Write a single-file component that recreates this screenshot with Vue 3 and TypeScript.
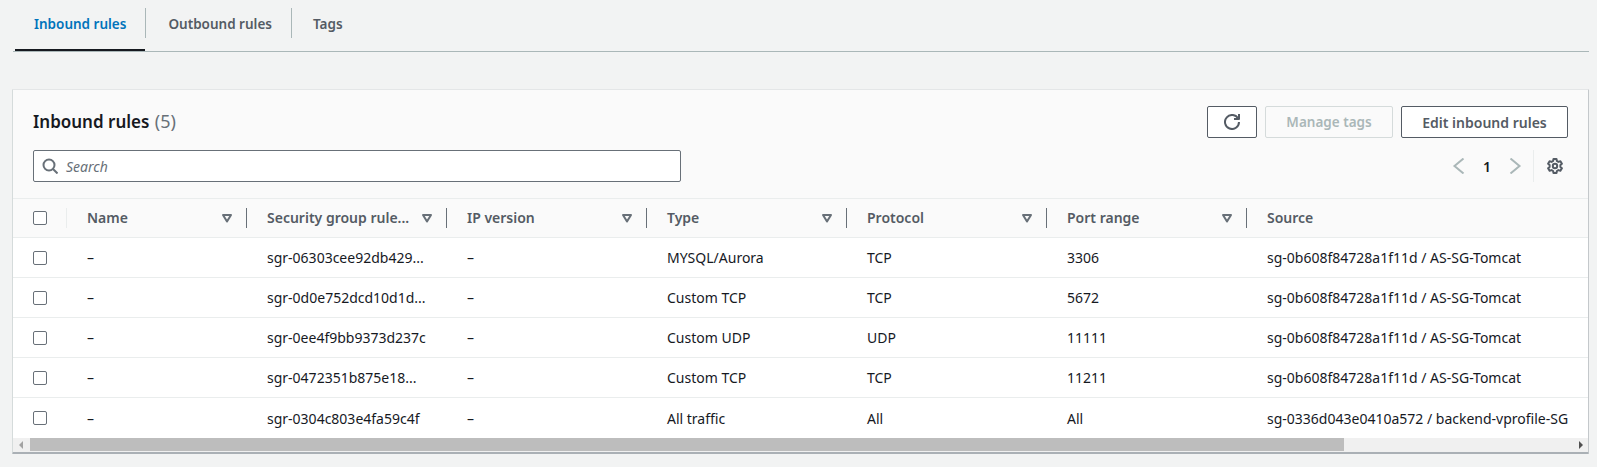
<script setup lang="ts">
interface Row { id: string; type: string; proto: string; port: string; source: string }
const cols: string[] = ['Name', 'Security group rule...', 'IP version', 'Type', 'Protocol', 'Port range']
const rows: Row[] = [
  { id: 'sgr-06303cee92db429...', type: 'MYSQL/Aurora', proto: 'TCP', port: '3306', source: 'sg-0b608f84728a1f11d / AS-SG-Tomcat' },
  { id: 'sgr-0d0e752dcd10d1d...', type: 'Custom TCP', proto: 'TCP', port: '5672', source: 'sg-0b608f84728a1f11d / AS-SG-Tomcat' },
  { id: 'sgr-0ee4f9bb9373d237c', type: 'Custom UDP', proto: 'UDP', port: '11111', source: 'sg-0b608f84728a1f11d / AS-SG-Tomcat' },
  { id: 'sgr-0472351b875e18...', type: 'Custom TCP', proto: 'TCP', port: '11211', source: 'sg-0b608f84728a1f11d / AS-SG-Tomcat' },
  { id: 'sgr-0304c803e4fa59c4f', type: 'All traffic', proto: 'All', port: 'All', source: 'sg-0336d043e0410a572 / backend-vprofile-SG' },
]
</script>

<template>
  <div class="page">
    <nav class="tabs">
      <a class="tab active">Inbound rules</a>
      <a class="tab">Outbound rules</a>
      <a class="tab last">Tags</a>
    </nav>
    <section class="card">
      <header class="head">
        <div class="head-top">
          <h2 class="title">Inbound rules <span class="count">(5)</span></h2>
          <div class="actions">
            <button class="btn icon-btn" aria-label="Refresh">
              <svg width="16" height="16" viewBox="0 0 16 16" fill="none" stroke="#545b64" stroke-width="2">
                <path d="M10 5h5V0" stroke-linejoin="round" />
                <path d="M15 8a7 7 0 1 1-.76-3.170" />
              </svg>
            </button>
            <button class="btn disabled">Manage tags</button>
            <button class="btn edit">Edit inbound rules</button>
          </div>
        </div>
        <div class="head-bottom">
          <label class="search">
            <svg width="16" height="16" viewBox="0 0 16 16" fill="none" stroke="#687078" stroke-width="2">
              <circle cx="7" cy="7" r="5.500" />
              <path d="M11 11l4.500 4.500" />
            </svg>
            <span class="placeholder">Search</span>
          </label>
          <div class="pager">
            <svg class="chev" width="16" height="16" viewBox="0 0 16 16" fill="none" stroke="#aab7b8" stroke-width="2">
              <path d="M12.500 .5L3.500 8l9 7.500" />
            </svg>
            <span class="page-no">1</span>
            <svg class="chev" width="16" height="16" viewBox="0 0 16 16" fill="none" stroke="#aab7b8" stroke-width="2">
              <path d="M3.500 .5L12.500 8l-9 7.500" />
            </svg>
            <span class="pager-sep"></span>
            <svg class="gear" width="16" height="16" viewBox="0 0 16 16" fill="none" stroke="#545b64" stroke-width="2">
              <circle cx="8" cy="8" r="2.200" />
              <path d="M6.500 1h3l.4 2 1.500.9 2-.7 1.500 2.600-1.500 1.300v1.800l1.500 1.300-1.500 2.600-2-.7-1.500.9-.4 2h-3l-.4-2-1.500-.9-2 .7L1.100 10.200l1.500-1.300V7.100L1.100 5.800l1.500-2.600 2 .7 1.500-.9z" stroke-linejoin="round" />
            </svg>
          </div>
        </div>
      </header>
      <div class="table">
        <div class="row thead">
          <div class="cell check-cell"><span class="box"></span></div>
          <div v-for="c in cols" :key="c" class="cell th">
            <span class="th-text">{{ c }}</span>
            <svg class="sort" width="12" height="12" viewBox="0 0 12 12" fill="none" stroke="#687078" stroke-width="2">
              <path d="M2 3h8L6 9.500z" stroke-linejoin="round" />
            </svg>
          </div>
          <div class="cell th source">Source</div>
        </div>
        <div v-for="r in rows" :key="r.id" class="row tr">
          <div class="cell check-cell"><span class="box"></span></div>
          <div class="cell">–</div>
          <div class="cell">{{ r.id }}</div>
          <div class="cell">–</div>
          <div class="cell">{{ r.type }}</div>
          <div class="cell">{{ r.proto }}</div>
          <div class="cell">{{ r.port }}</div>
          <div class="cell source">{{ r.source }}</div>
        </div>
      </div>
      <div class="scrollbar">
        <span class="arrow left"></span>
        <span class="thumb"></span>
        <span class="arrow right"></span>
      </div>
    </section>
  </div>
</template>

<style scoped>
.page {
  width: 1597px;
  height: 467px;
  box-sizing: border-box;
  background: #f2f3f3;
  padding: 0 8px 0 12px;
  font-family: "Noto Sans", sans-serif;
  font-size: 14px;
  color: #16191f;
  overflow: hidden;
}
.tabs {
  display: flex;
  height: 52px;
  margin-left: 1px;
  border-bottom: 1px solid #aab7b8;
  box-sizing: border-box;
  align-items: stretch;
  padding-top: 8px;
  padding-left: 2px;
  margin-bottom: 37px;
}
.tab {
  font-weight: 600;
  color: #545b64;
  padding: 0 19px 0 22px;
  height: 30px;
  line-height: 32px;
  border-right: 1px solid #aab7b8;
  font-size: 13.5px;
}
.tab.last { border-right: 0; padding-left: 21px; }
.tab.active {
  color: #0073bb;
  position: relative;
  padding-left: 19px;
}
.tab.active::after {
  content: "";
  position: absolute;
  left: 0;
  right: 0;
  top: 41px;
  height: 2px;
  background: #16191f;
}
.card {
  width: 1577px;
  height: 365px;
  box-sizing: border-box;
  background: #fff;
  border: 1px solid #e4e6e7;
  border-left: 1px solid #d5dbdb;
  border-right: 1px solid #c4c8cb;
  border-bottom: 2px solid #aab0b5;
  overflow: hidden;
  border-radius: 1px;
}
.head {
  background: #fafafa;
  height: 109px;
  box-sizing: border-box;
  border-bottom: 1px solid #eaeded;
  padding: 16px 20px 0 20px;
}
.head-top { display: flex; justify-content: space-between; align-items: flex-start; }
.title {
  margin: 0;
  font-size: 17px;
  font-weight: 600;
  line-height: 26px;
  padding-top: 2px;
  color: #16191f;
}
.count { font-weight: 400; color: #687078; font-size: 18px; margin-left: 1px; }
.actions { display: flex; gap: 8px; }
.btn {
  height: 32px;
  box-sizing: border-box;
  border: 1px solid #545b64;
  background: #fff;
  color: #545b64;
  border-radius: 2px;
  font-family: inherit;
  font-weight: 600;
  font-size: 14px;
  padding: 0;
  display: flex;
  align-items: center;
  justify-content: center;
}
.icon-btn { width: 50px; }
.btn.disabled { color: #aab7b8; border-color: #d5dbdb; background: #fafafa; width: 128px; font-size: 13.500px; }
.btn.edit { width: 167px; }
.head-bottom { display: flex; justify-content: space-between; align-items: center; margin-top: 12px; }
.search {
  width: 648px;
  height: 32px;
  box-sizing: border-box;
  background: #fff;
  border: 1px solid #687078;
  border-radius: 2px;
  display: flex;
  align-items: center;
  padding-left: 8px;
  gap: 8px;
}
.placeholder { font-style: italic; color: #687078; font-size: 14px; }
.pager { display: flex; align-items: center; height: 32px; margin-right: 5px; }
.page-no { font-weight: 600; width: 40px; text-align: center; font-size: 14px; }
.pager-sep { width: 1px; height: 32px; background: #eaeded; margin: 0 13px 0 10px; }
.table { background: #fff; }
.row {
  display: grid;
  grid-template-columns: 54px 180px 200px 200px 200px 200px 200px 1fr;
}
.thead {
  height: 39px;
  background: #fafafa;
  border-bottom: 1px solid #eaeded;
  box-sizing: border-box;
  color: #545b64;
  font-weight: 600;
}
.tr {
  height: 40px;
  box-sizing: border-box;
  border-bottom: 1px solid #eaeded;
}
.tr:last-child { border-bottom: 0; }
.cell {
  display: flex;
  align-items: center;
  padding-left: 20px;
  white-space: nowrap;
  font-size: 14px;
  min-width: 0;
}
.check-cell { padding-left: 20px; }
.th { position: relative; justify-content: space-between; padding-right: 14px; padding-bottom: 1px; }
.th::after {
  content: "";
  position: absolute;
  right: 0;
  top: 9px;
  height: 20px;
  width: 1px;
  background: #687078;
}
.th.source::after { display: none; }
.thead .check-cell { position: relative; }
.thead .check-cell::after {
  content: "";
  position: absolute;
  right: 0;
  top: 9px;
  height: 20px;
  width: 1px;
  background: #eaeded;
}
.box {
  width: 14px;
  height: 14px;
  box-sizing: border-box;
  border: 1px solid #687078;
  border-radius: 2px;
  background: #fff;
}
.source { overflow: hidden; }
.scrollbar {
  height: 14px;
  background: #f0f0f0;
  position: relative;
}
.thumb {
  position: absolute;
  left: 17px;
  width: 1314px;
  top: 0;
  height: 13px;
  background: #bdbdbd;
}
.arrow { position: absolute; width: 0; height: 0; border-top: 4px solid transparent; border-bottom: 4px solid transparent; top: 3px; }
.arrow.left { left: 6px; border-right: 4px solid #a3a3a3; }
.arrow.right { right: 5px; border-left: 4px solid #505050; }
</style>

<style>
html, body { margin: 0; background: #f2f3f3; }
</style>
